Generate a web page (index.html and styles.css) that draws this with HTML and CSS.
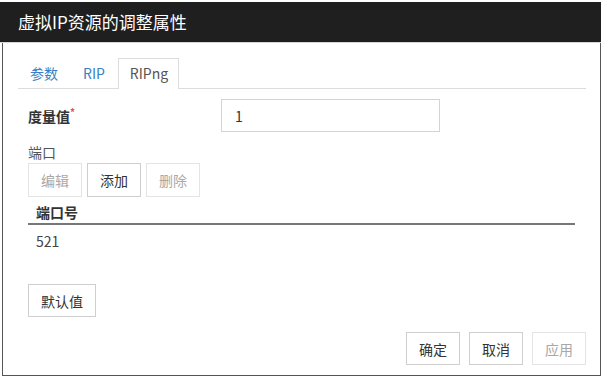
FILE: index.html
```html
<!DOCTYPE html>
<html lang="zh-CN">
<head>
    <meta charset="UTF-8">
    <title>虚拟IP资源的调整属性</title>
    <link rel="stylesheet" href="styles.css">
</head>
<body>
    <div class="dialog">
        <div class="dialog-header">虚拟IP资源的调整属性</div>
        <div class="dialog-body">
            <ul class="tabs">
                <li class="tab">参数</li>
                <li class="tab">RIP</li>
                <li class="tab active">RIPng</li>
            </ul>

            <div class="form">
                <div class="form-row">
                    <label class="form-label">度量值<span class="required">*</span></label>
                    <input class="form-input" type="text" value="1">
                </div>

                <div class="port-label">端口</div>
                <div class="btn-group">
                    <button class="btn" disabled>编辑</button>
                    <button class="btn">添加</button>
                    <button class="btn" disabled>删除</button>
                </div>

                <table class="port-table">
                    <thead>
                        <tr><th>端口号</th></tr>
                    </thead>
                    <tbody>
                        <tr><td>521</td></tr>
                    </tbody>
                </table>

                <button class="btn btn-default">默认值</button>
            </div>

            <div class="dialog-footer">
                <button class="btn">确定</button>
                <button class="btn">取消</button>
                <button class="btn" disabled>应用</button>
            </div>
        </div>
    </div>
</body>
</html>
```

FILE: styles.css
```css
body {
    margin: 0;
    padding-top: 2px;
    background-color: #ffffff;
    font-family: "Noto Sans CJK SC", "Open Sans", sans-serif;
    font-size: 14px;
    color: #333333;
}

.dialog {
    width: 601px;
}

.dialog-header {
    height: 40px;
    line-height: 40px;
    padding-left: 18px;
    background-color: #1f1f1f;
    border-bottom: 1px solid #d6d6d6;
    color: #ffffff;
    font-size: 17px;
}

.dialog-body {
    box-sizing: border-box;
    display: flex;
    flex-direction: column;
    height: 333px;
    margin-left: 2px;
    padding: 15px 14px 0 15px;
    border-left: 1px solid #555555;
    border-right: 1px solid #555555;
    border-bottom: 1px solid #555555;
}

.tabs {
    display: flex;
    gap: 2px;
    margin: 0;
    padding: 0;
    list-style: none;
    border-bottom: 1px solid #dddddd;
}

.tab {
    height: 29px;
    line-height: 29px;
    padding: 0 10px 0 11px;
    margin-bottom: -1px;
    border: 1px solid transparent;
    border-bottom: none;
    color: #3b7fc4;
}

.tab.active {
    height: 30px;
    padding: 0 10px 0 11px;
    border-color: #dddddd;
    background-color: #ffffff;
    color: #555555;
}

.form {
    padding: 10px 0 0 10px;
}

.form-row {
    display: flex;
    align-items: center;
}

.form-label {
    width: 193px;
    font-weight: bold;
    color: #333333;
}

.required {
    position: relative;
    top: -6px;
    font-size: 10px;
    color: #d9534f;
}

.form-input {
    box-sizing: border-box;
    width: 219px;
    height: 33px;
    padding: 0 13px;
    border: 1px solid #d4d4d4;
    font-family: inherit;
    font-size: 14px;
    color: #333333;
}

.port-label {
    margin-top: 10px;
    line-height: 20px;
    color: #555555;
}

.btn-group {
    display: flex;
    gap: 5px;
    margin-top: 1px;
}

.btn {
    box-sizing: border-box;
    height: 34px;
    padding: 0 12px;
    background-color: #ffffff;
    border: 1px solid #cfcfcf;
    font-family: inherit;
    font-size: 14px;
    color: #333333;
}

.btn:disabled {
    border-color: #e4e4e4;
    color: #a8a8a8;
}

.port-table {
    width: 547px;
    border-collapse: collapse;
}

.port-table th {
    padding: 4px 0 0 8px;
    line-height: 22px;
    text-align: left;
    border-bottom: 2px solid #777777;
}

.port-table td {
    padding-left: 8px;
    line-height: 30px;
    color: #444444;
}

.btn-default {
    margin-top: 27px;
    height: 33px;
    padding: 0 12px;
}

.dialog-footer {
    display: flex;
    justify-content: flex-end;
    gap: 9px;
    margin-top: auto;
    margin-bottom: 10px;
}

.dialog-footer .btn {
    height: 33px;
}
```
